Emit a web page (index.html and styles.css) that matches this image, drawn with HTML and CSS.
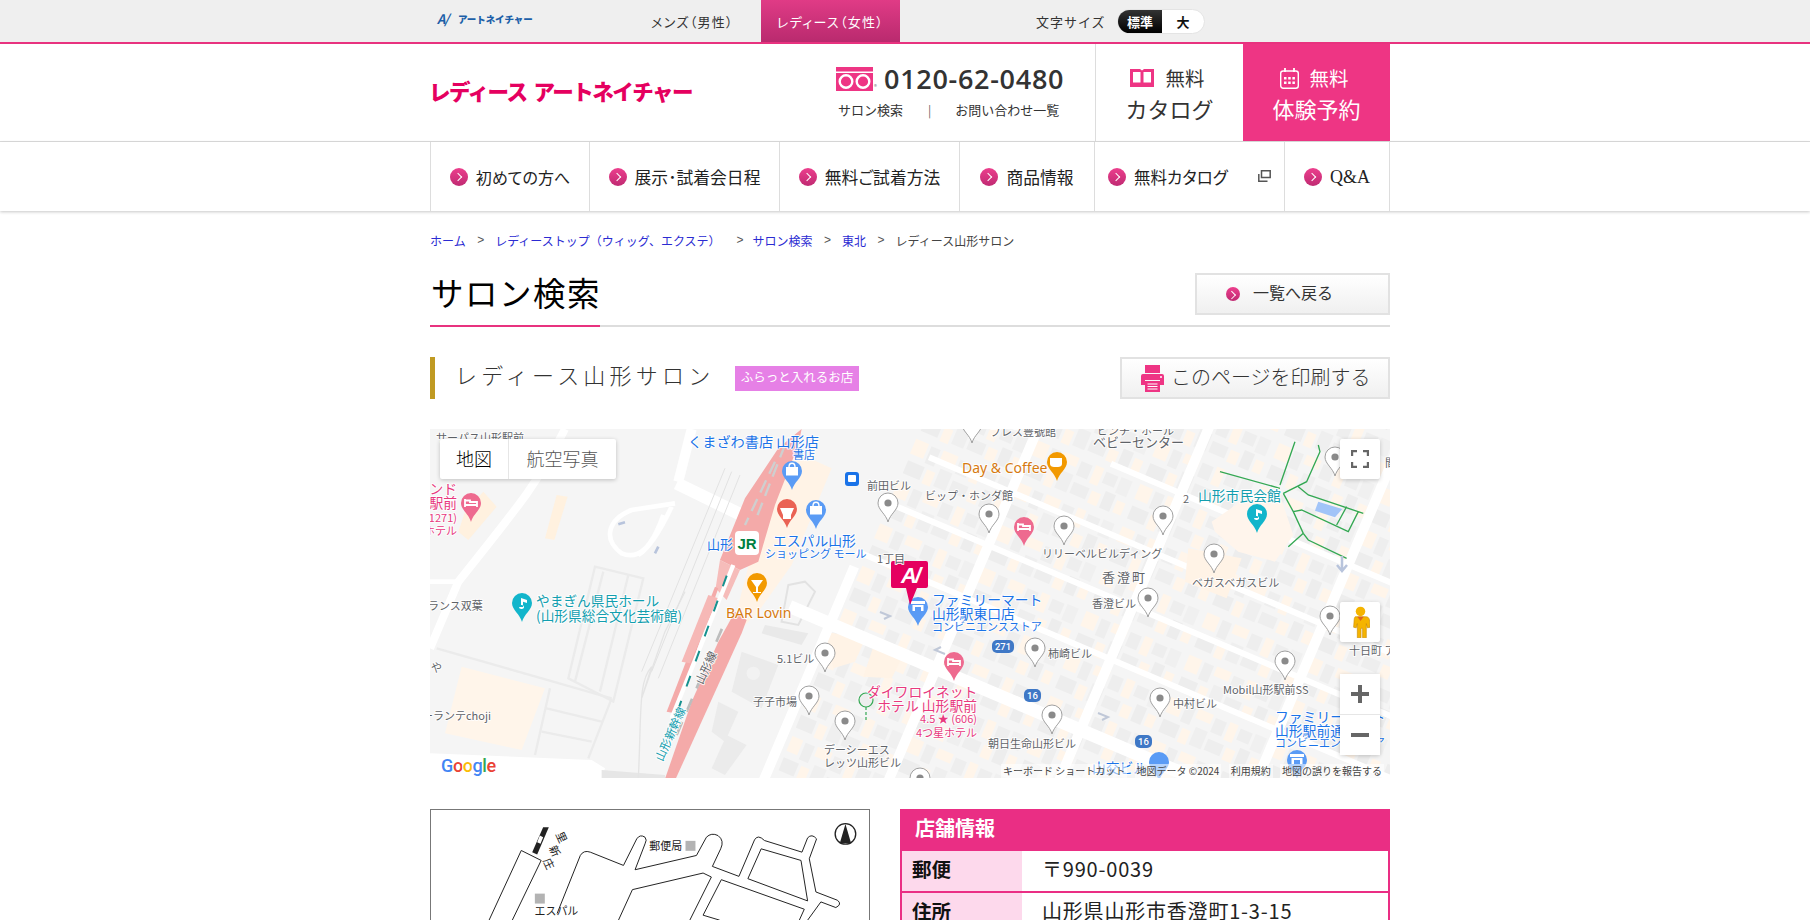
FILE: index.html
```html
<!DOCTYPE html>
<html lang="ja">
<head>
<meta charset="utf-8">
<title>サロン検索</title>
<link rel="stylesheet" href="styles.css">
</head>
<body>
<div class="topbar">
  <div class="wrap topbar-in">
    <a class="brand-small"><span class="an">A/</span><span>アートネイチャー</span></a>
    <a class="tab">メンズ（男性）</a>
    <a class="tab tab-on">レディース（女性）</a>
    <span class="size-label">文字サイズ</span>
    <div class="size-switch"><span class="size-on">標準</span><span class="size-off">大</span></div>
  </div>
</div>
<header class="header">
  <div class="wrap header-in">
    <div class="logo"><span>レディース</span><span>アートネイチャー</span></div>
    <div class="contact">
      <div class="phone">
        <svg class="freedial" viewBox="0 0 37 24"><rect width="37" height="24" fill="#ee3584"/><rect y="4.500" width="37" height="1.500" fill="#fff"/><circle cx="10" cy="14.500" r="6.300" fill="none" stroke="#fff" stroke-width="2.400"/><circle cx="27" cy="14.500" r="6.300" fill="none" stroke="#fff" stroke-width="2.400"/></svg>
        <span class="reg">®</span>
        <span class="tel">0120-62-0480</span>
      </div>
      <div class="contact-links"><a>サロン検索</a><i>|</i><a>お問い合わせ一覧</a></div>
    </div>
    <a class="cta">
      <span class="cta-top">
        <svg class="ico-book" viewBox="0 0 24 18"><path d="M0 0h10l2 1.500L14 0h10v18H14l-2 0-2 0H0z" fill="#ee3584"/><path d="M3 3h7.500v10.500H3zM13.500 3H21v10.500h-7.500z" fill="#fff"/></svg>
        <span>無料</span>
      </span>
      <span class="cta-big">カタログ</span>
    </a>
    <a class="cta cta-pink">
      <span class="cta-top">
        <svg class="ico-cal" viewBox="0 0 19 21"><rect x=".7" y="3" width="17.600" height="17.300" rx="2.500" fill="none" stroke="#fff" stroke-width="1.400"/><path d="M5 0v4M14 0v4" stroke="#fff" stroke-width="1.800"/><path d="M4 9h2.500v2.500H4zM8.200 9h2.500v2.500H8.200zM12.400 9h2.500v2.500h-2.500zM4 13.500h2.500V16H4zM8.200 13.500h2.500V16H8.200zM12.400 13.500h2.500V16h-2.500z" fill="#fff"/></svg>
        <span>無料</span>
      </span>
      <span class="cta-big">体験予約</span>
    </a>
  </div>
</header>
<nav class="nav">
  <ul class="wrap nav-in">
    <li><a><span class="chev"></span>初めての方へ</a></li>
    <li><a><span class="chev"></span>展示･試着会日程</a></li>
    <li><a><span class="chev"></span>無料ご試着方法</a></li>
    <li><a><span class="chev"></span>商品情報</a></li>
    <li class="nav-ext"><a><span class="chev"></span><span class="nav-small">無料カタログ</span><svg class="ico-ext" viewBox="0 0 13 12"><path d="M3.500 .8h8.700v6.700H3.500z" fill="none" stroke="#555" stroke-width="1.500"/><path d="M.8 4v7.200h8.700" fill="none" stroke="#555" stroke-width="1.500"/></svg></a></li>
    <li><a><span class="chev"></span><span class="qa">Q&amp;A</span></a></li>
  </ul>
</nav>
<main class="wrap">
  <div class="crumbs">
    <a>ホーム</a><b>&gt;</b><a>レディーストップ（ウィッグ、エクステ）</a><b class="gap">&gt;</b><a>サロン検索</a><b>&gt;</b><a>東北</a><b>&gt;</b><span>レディース山形サロン</span>
  </div>
  <div class="title-row">
    <h1>サロン検索</h1>
    <a class="btn btn-back"><span class="chev chev-s"></span><span class="btn-text">一覧へ戻る</span></a>
  </div>
  <div class="sub-row">
    <h2>レディース山形サロン</h2>
    <span class="badge">ふらっと入れるお店</span>
    <a class="btn btn-print">
      <svg class="ico-print" viewBox="0 0 23 27"><path d="M4 0h15v8H4z" fill="#ee3584"/><path d="M2 9h19a2 2 0 0 1 2 2v9h-4v-5H4v5H0v-9a2 2 0 0 1 2-2z" fill="#ee3584"/><circle cx="20" cy="12" r="1" fill="#fff"/><path d="M4 16h15v11H4z" fill="#ee3584"/><path d="M6.500 19h10M6.500 21.500h10M6.500 24h10" stroke="#fff" stroke-width="1"/></svg>
      <span class="btn-text">このページを印刷する</span>
    </a>
  </div>

  <div class="map">
    <svg class="map-svg" viewBox="0 -1 960 349">
      <defs>
        <path id="pin" d="M0 0C-2-8-10-12-10-19A10 10 0 1 1 10-19C10-12 2-8 0 0Z"/>
        <g id="gpin"><use href="#pin" class="pin-grey"/><circle cy="-19" r="3.600" fill="#8a8a8a"/></g>
        <g id="bed"><path d="M-6-15v-8M-6-17H6v-3H-1v-1.500H-6M6-15v-5" fill="none" stroke="#fff" stroke-width="1.800"/></g>
        <g id="bag"><path d="M-6-23H6v8.500H-6z" fill="#fff"/><path d="M-3-23c0-5 6-5 6 0" fill="none" stroke="#fff" stroke-width="1.400"/></g>
        <g id="mart"><path d="M-7-25H7v3H-7zM-5.500-21h11v6h-2.500v-4h-6v4h-2.500z" fill="#fff"/></g>
        <g id="note"><path d="M-3-15a2.500 2 0 1 0 2-2v-7l6 2v3l-4-1.300V-15z" fill="#fff"/></g>
        <pattern id="blocks" width="112" height="46" patternUnits="userSpaceOnUse" patternTransform="rotate(23)">
          <rect width="112" height="46" fill="#f5f5f5"/>
          <rect x="3" y="2" width="14" height="16" fill="#fff5ea"/>
          <rect x="20" y="3" width="10" height="18" fill="#eeeeee"/>
          <rect x="33" y="2" width="16" height="10" fill="#fff5ea"/>
          <rect x="52" y="4" width="12" height="15" fill="#eeeeee"/>
          <rect x="67" y="2" width="9" height="19" fill="#fff5ea"/>
          <rect x="79" y="4" width="13" height="12" fill="#eeeeee"/>
          <rect x="95" y="3" width="12" height="17" fill="#f0f0f0"/>
          <rect x="4" y="25" width="18" height="14" fill="#ededed"/>
          <rect x="25" y="26" width="9" height="15" fill="#fff5ea"/>
          <rect x="37" y="20" width="13" height="19" fill="#efefef"/>
          <rect x="53" y="26" width="17" height="12" fill="#eeeeee"/>
          <rect x="73" y="27" width="10" height="13" fill="#fff5ea"/>
          <rect x="86" y="22" width="11" height="18" fill="#ededed"/>
          <rect x="100" y="26" width="9" height="13" fill="#fff5ea"/>
        </pattern>
      </defs>

      <rect y="-1" width="960" height="350" fill="#f5f5f5"/>
      <polygon points="345,349 487,-1 960,-1 960,349" fill="url(#blocks)"/>

      <!-- west side and station, in crop units -->
      <g transform="matrix(.3333 0 0 .3333 -5 -5)">
        <polygon points="110,725 360,790 290,975 60,925" fill="#fff5ea"/>
        <polygon points="395,210 428,215 388,345 360,340" fill="#fff1df"/>
        <polygon points="100,320 130,345 215,245 175,200 120,260" fill="#fff1df"/>
        <polygon points="1065,60 1220,130 1100,420 1000,560 960,600 940,540" fill="#fff3e6"/>
        <path d="M420,12C340,170 300,220 100,470L15,670" fill="none" stroke="#fff" stroke-width="24"/>
        <path d="M15,470H100" fill="none" stroke="#fff" stroke-width="14"/>
        <path d="M800,12L760,170" fill="none" stroke="#fff" stroke-width="30"/>
        <path d="M755,175L950,270" fill="none" stroke="#fff" stroke-width="38"/>
        <path d="M750,235L620,255C545,285 535,345 590,385C640,405 680,370 715,270M740,245C700,330 665,375 640,390" fill="none" stroke="#fff" stroke-width="14"/>
        <path d="M580,298L600,292M700,365L690,385" stroke="#b8c4dc" stroke-width="8"/>
        <path d="M430,760L510,425L655,460L565,830ZM535,440L450,770M610,450L525,800" fill="none" stroke="#ebebeb" stroke-width="7"/>
        <path d="M35,670L560,820M375,790L330,990M560,820L490,1000M365,850L530,890M350,920L500,950" fill="none" stroke="#ebebeb" stroke-width="7"/>
        <polygon points="15,985 500,1005 540,1030 530,1062 15,1062" fill="#fff"/>
        <polygon points="530,1035 720,1050 720,1062 530,1062" fill="#e6e6e6"/>
        <path d="M780,500L720,620 650,820 680,725C640,770 650,850 640,1062" fill="none" stroke="#e4e4e4" stroke-width="4"/>
        <path d="M900,130L650,740M920,140L680,740M945,150L700,760" fill="none" stroke="#e2e2e2" stroke-width="3"/>
        <polygon points="720,1062 752,1062 950,625 965,585 930,560 880,650 800,830" fill="#f4aaa9"/>
        <polygon points="1060,70 1130,12 1120,60 1050,240 1000,410 945,435 885,405 960,220" fill="#f4aaa9"/>
        <polygon points="885,405 945,435 905,525 872,490" fill="#f6bcba"/>
        <polygon points="725,860 750,865 880,490 870,485" fill="#f4aaa9"/>
        <polygon points="770,710 795,715 880,520 850,510" fill="#f6b8b6"/>
        <path d="M1080,60L990,290M1050,110L960,300" stroke="#cfcfcf" stroke-width="7" stroke-dasharray="40 22"/>
        <path d="M740,880L925,420" stroke="#fff" stroke-width="13"/>
        <path d="M730,935L915,425" stroke="#17918f" stroke-width="6" stroke-dasharray="34 46"/>
        <path d="M755,930L900,590" stroke="#bdbdbd" stroke-width="8" stroke-dasharray="42 34"/>
        <polygon points="1020,600 1150,625 1130,660 1010,625" fill="#e9e9e9"/>
        <polygon points="950,680 1060,720 1010,850 920,800" fill="#ebebeb"/>
        <circle cx="985" cy="745" r="20" fill="#f2f2f2"/>
        <polygon points="880,830 940,860 900,950 860,920" fill="#ebebeb"/>
        <polygon points="905,930 965,960 900,1050 860,1030" fill="#ebebeb"/>
        <polygon points="1200,620 1320,640 1290,710 1225,730" fill="#fff3e6"/>
        <polygon points="1350,650 1440,680 1400,760 1315,755" fill="#fff3e6"/>
        <polygon points="1090,480 1140,470 1170,500 1120,600 1070,590" fill="#f5f5f5" stroke="#e2e2e2" stroke-width="6"/>
      </g>

      <!-- street grid east of the station -->
      <g transform="rotate(23)" stroke="#fff" fill="none">
        <path d="M444-40V200M559-320V200M716-440V200M898-560V200" stroke-width="10"/>
        <path d="M400 22H1250" stroke-width="13"/>
        <path d="M440-55H1250M460-112H1250M470-170H1250M640-235H1250" stroke-width="6"/>
      </g>
      <g transform="matrix(.3333 0 0 .3333 475 -5)">
        <polygon points="920,290 1000,235 1130,225 1165,330 1110,410 1000,380 930,320" fill="#fff5ec"/>
        <polygon points="850,370 1010,400 965,520 840,470" fill="#fff3e6"/>
        <polygon points="1240,230 1312,252 1290,277 1230,257" fill="#a1c4f8"/>
        <path d="M1170,50L1125,180M1240,60L1245,80 1205,170 1135,205M945,140L1125,190M1135,205L1165,260 1195,325 1210,345 1325,400M1195,325L1150,365M1180,185L1210,210 1375,265M1165,260L1190,255 1330,320 1360,260M1325,245L1295,300" fill="none" stroke="#34a853" stroke-width="4"/>
      </g>
      <path d="M907 135l5 6 5-6M912 126v14" stroke="#b8c4dc" stroke-width="2.500" fill="none"/>
      <path d="M515 224l-10-4 6-3M668 283l10 4-6 3M450 182l10 4-6 3" stroke="#c0c8d8" stroke-width="2" fill="none"/>
      <path d="M436 277v15" stroke="#34a853" stroke-width="1.200" stroke-dasharray="3 2"/>
      <circle cx="436" cy="270" r="7" fill="none" stroke="#34a853" stroke-width="1.200"/>

      <!-- grey pins -->
      <use href="#gpin" x="458" y="92"/><use href="#gpin" x="395" y="242"/><use href="#gpin" x="379" y="285"/>
      <use href="#gpin" x="415" y="310"/><use href="#gpin" x="542" y="13"/><use href="#gpin" x="559" y="103"/>
      <use href="#gpin" x="634" y="115"/><use href="#gpin" x="733" y="105"/><use href="#gpin" x="784" y="143"/>
      <use href="#gpin" x="718" y="187"/><use href="#gpin" x="900" y="205"/><use href="#gpin" x="605" y="237"/>
      <use href="#gpin" x="622" y="304"/><use href="#gpin" x="730" y="287"/><use href="#gpin" x="855" y="250"/>
      <use href="#gpin" x="905" y="46"/><use href="#gpin" x="490" y="367"/>

      <!-- coloured pins -->
      <g fill="#5a9bf5"><use href="#pin" x="362" y="60"/><use href="#bag" x="362" y="60"/><use href="#pin" x="386" y="99"/><use href="#bag" x="386" y="99"/></g>
      <g fill="#5a9bf5"><use href="#pin" x="488" y="196"/><use href="#mart" x="488" y="196"/><use href="#pin" x="729" y="351"/><use href="#pin" x="867" y="349"/><use href="#mart" x="867" y="349"/></g>
      <g fill="#ee6a8f"><use href="#pin" x="41" y="92"/><use href="#bed" x="41" y="92"/><use href="#pin" x="594" y="116"/><use href="#bed" x="594" y="116"/><use href="#pin" x="524" y="251"/><use href="#bed" x="524" y="251"/></g>
      <use href="#pin" x="357" y="98" fill="#ea6254"/><path d="M350 78h14l-3 7v4h-8v-4z" fill="#fff"/>
      <use href="#pin" x="327" y="172" fill="#f29900"/><path d="M321 150h12l-5 7v5h3v1h-8v-1h3v-5z" fill="#fff"/>
      <use href="#pin" x="627" y="51" fill="#f29900"/><path d="M620 28h12v6c0 2-2 3-4 3h-4c-2 0-4-1-4-3z" fill="#fff"/>
      <g fill="#12b5cb"><use href="#pin" x="92" y="192"/><use href="#note" x="92" y="192"/><use href="#pin" x="827" y="103"/><use href="#note" x="827" y="103"/></g>

      <rect x="415" y="42" width="14" height="14" rx="3" fill="#1a73e8"/><rect x="418" y="45" width="8" height="7" rx="1" fill="#fff"/>
      <rect x="305" y="101" width="24" height="24" rx="4" fill="#fff"/>
      <text class="jr" x="317" y="113">JR</text>

      <!-- route shields -->
      <rect x="562" y="210" width="22" height="13" rx="5" fill="#3f78c6"/><text class="shield" x="573" y="216.500">271</text>
      <rect x="594" y="259" width="17" height="13" rx="5" fill="#3f78c6"/><text class="shield" x="602.500" y="265.500">16</text>
      <rect x="705" y="305" width="17" height="13" rx="5" fill="#3f78c6"/><text class="shield" x="713.500" y="311.500">16</text>

      <!-- salon marker -->
      <path d="M463 131h33a2 2 0 0 1 2 2v23a2 2 0 0 1-2 2h-9l-7 17-4-17h-13a2 2 0 0 1-2-2v-23a2 2 0 0 1 2-2z" fill="#e5005f"/>
      <text class="an-pin" x="480" y="145">A/</text>

      <!-- labels -->
      <g class="poi">
        <text x="6" y="7">サーパス山形駅前</text>
        <text x="437" y="55">前田ビル</text>
        <text x="447" y="128">1丁目</text>
        <text x="-2" y="175">ランス双葉</text>
        <text x="-10" y="237">ろや</text>
        <text x="-8" y="285">ーランテchoji</text>
        <text x="347" y="228">5.1ビル</text>
        <text x="323" y="271">子子市場</text>
        <text x="394" y="319">デーシーエス</text>
        <text x="394" y="332">レッツ山形ビル</text>
        <text x="560" y="1">プレス豊號館</text>
        <text x="667" y="0">ピンチ・ホール</text>
        <text class="s13" x="663" y="11">ベビーセンター</text>
        <text x="495" y="65">ビップ・ホンダ館</text>
        <text x="753" y="68">2</text>
        <text x="612" y="123">リリーベルビルディング</text>
        <text class="town" x="672" y="146">香澄町</text>
        <text x="762" y="152">ベガスベガスビル</text>
        <text x="662" y="173">香澄ビル</text>
        <text x="618" y="223">柿崎ビル</text>
        <text x="558" y="313">朝日生命山形ビル</text>
        <text x="743" y="273">中村ビル</text>
        <text x="793" y="259">Mobil山形駅前SS</text>
        <text x="955" y="32">間</text>
        <text x="919" y="220">十日町 ア</text>
        <text class="s-rail" transform="translate(268 253) rotate(-65)">山形線</text>
      </g>
      <g class="blue">
        <text class="s145" x="258" y="11">くまざわ書店 山形店</text>
        <text x="363" y="24">書店</text>
        <text class="s13" x="277" y="113">山形</text>
        <text class="s14" x="343" y="110">エスパル山形</text>
        <text x="335" y="123">ショッピング モール</text>
        <text class="s14" x="502" y="169">ファミリーマート</text>
        <text class="s14" x="502" y="183">山形駅東口店</text>
        <text x="502" y="196">コンビニエンスストア</text>
        <text class="s14" x="845" y="286">ファミリーマート</text>
        <text class="s14" x="845" y="300">山形駅前通</text>
        <text x="845" y="312">コンビニエンスストア</text>
        <text class="s14" x="662" y="337">山交ビル</text>
      </g>
      <g class="teal">
        <text class="s137" x="106" y="170">やまぎん県民ホール</text>
        <text class="s137" x="106" y="185">(山形県総合文化芸術館)</text>
        <text class="s14" x="768" y="65">山形市民会館</text>
        <text class="s-rail" transform="translate(228 330) rotate(-66)">山形新幹線</text>
      </g>
      <g class="orange">
        <text x="296" y="182">BAR Lovin</text>
        <text x="532" y="37">Day &amp; Coffee</text>
      </g>
      <g class="hotel">
        <text class="s14 end" x="27" y="58">ンド</text>
        <text class="s14 end" x="27" y="72">駅前</text>
        <text class="end" x="27" y="87">1271)</text>
        <text class="end" x="27" y="100">ホテル</text>
        <text class="s14" x="437" y="261">ダイワロイネット</text>
        <text class="s14 end" x="547" y="275">ホテル 山形駅前</text>
        <text class="end" x="547" y="288">4.5 ★ (606)</text>
        <text class="end" x="547" y="302">4つ星ホテル</text>
      </g>
      <text class="google" x="11" y="335"><tspan fill="#4285f4">G</tspan><tspan fill="#ea4335">o</tspan><tspan fill="#fbbc05">o</tspan><tspan fill="#4285f4">g</tspan><tspan fill="#34a853">l</tspan><tspan fill="#ea4335">e</tspan></text>
    </svg>

    <div class="map-type"><span class="type-on">地図</span><span>航空写真</span></div>
    <button class="map-ctl map-full" aria-label="全画面">
      <svg viewBox="0 0 18 18"><path d="M1 6V1h5M12 1h5v5M17 12v5h-5M6 17H1v-5" fill="none" stroke="#666" stroke-width="2.400"/></svg>
    </button>
    <button class="map-ctl map-peg" aria-label="ストリートビュー">
      <svg viewBox="0 0 18 30"><circle cx="9" cy="5" r="4.500" fill="#f5b400"/><path d="M4 10h10c2 0 3 1 3.500 3l.5 7-2.500.5-1-4V30h-3.500v-9H9.500v9H6V16.500l-1 4-2.500-.5.500-7C3 11 4 10 4 10z" fill="#f5b400" stroke="#c98a00" stroke-width=".6"/><path d="M6 10l3 4 3-4z" fill="#e0641c"/></svg>
    </button>
    <div class="map-zoom">
      <button class="zoom-btn" aria-label="拡大"><svg viewBox="0 0 18 18"><path d="M9 0v18M0 9h18" stroke="#666" stroke-width="4"/></svg></button>
      <button class="zoom-btn" aria-label="縮小"><svg viewBox="0 0 18 18"><path d="M0 9h18" stroke="#666" stroke-width="4"/></svg></button>
    </div>
    <div class="map-attr"><span>キーボード ショートカット</span><span class="attr-bg">地図データ ©2024</span><span class="attr-bg">利用規約</span><span class="attr-bg">地図の誤りを報告する</span></div>
  </div>

  <div class="lower">
    <div class="access">
      <svg class="access-svg" viewBox="30 88 1320 660">
        <g fill="none" stroke="#222" stroke-width="3">
          <path d="M205,420L302,210 362,240 275,420"/>
          <path d="M410,400L480,225Q490,208 510,215L610,255 650,175Q660,160 675,170 682,178 675,190L645,268 830,225 860,170Q875,155 895,165 915,180 903,205L878,258 958,288 1005,178Q1015,160 1035,180L1148,215 1165,172Q1178,158 1192,175L1170,235 1190,335 1255,360Q1270,372 1250,382L1205,365 1165,420"/>
          <path d="M595,420L637,328 850,278 875,290 810,420"/>
          <path d="M905,298L1155,387 1140,420M905,298L850,405 900,420"/>
          <path d="M1025,205L1145,240 1165,362 985,295Z"/>
        </g>
        <path d="M335,215L368,140H385L350,222Z" fill="#222"/>
        <path d="M350,185L358,165 368,170 360,190Z" fill="#fff"/>
        <rect x="797" y="181" width="30" height="30" fill="#b3b3b3"/>
        <rect x="343" y="340" width="30" height="30" fill="#b3b3b3"/>
        <text class="acc-t" x="688" y="208">郵便局</text>
        <text class="acc-t" x="342" y="404">エスパル</text>
        <g class="acc-v">
          <text transform="translate(405 160) rotate(65)">里</text>
          <text transform="translate(385 202) rotate(65)">新</text>
          <text transform="translate(367 240) rotate(65)">庄</text>
        </g>
        <circle cx="1279" cy="160" r="31" fill="none" stroke="#222" stroke-width="4"/>
        <path d="M1279,130L1262,188H1296Z" fill="#222"/>
      </svg>
    </div>
    <div class="info">
      <h3>店舗情報</h3>
      <dl class="info-row"><dt>郵便</dt><dd>〒990-0039</dd></dl>
      <dl class="info-row"><dt>住所</dt><dd>山形県山形市香澄町1-3-15</dd></dl>
    </div>
  </div>
</main>
</body>
</html>
```

FILE: styles.css
```css
* { box-sizing: border-box; }
html, body { margin: 0; height: 100%; overflow: hidden; }
body { background: #fff; color: #333; font-family: "Noto Sans CJK JP", "Noto Sans", sans-serif; }
a { color: inherit; text-decoration: none; }
ul, dl, dd, h1, h2, h3 { margin: 0; padding: 0; }
.wrap { width: 960px; margin-left: 430px; }

/* top bar */
.topbar { height: 44px; background: #efefef; border-bottom: 2px solid #e8327f; }
.topbar-in { display: flex; height: 42px; align-items: center; }
.brand-small { display: flex; align-items: center; gap: 8px; width: 187px; margin-left: 7px; margin-top: -5px; color: #1c5fa8; font-weight: 900; font-size: 9.500px; white-space: nowrap; letter-spacing: -.1px; }
.an { font-style: italic; font-size: 13px; font-weight: 700; width: 13px; letter-spacing: -1px; }
.tab { display: flex; align-items: center; justify-content: center; height: 42px; width: 137px; font-size: 13px; font-feature-settings: "palt"; letter-spacing: 1.300px; color: #333; }
.tab-on { width: 139px; color: #fff; background: linear-gradient(#e03b86, #b92a6e); }
.size-label { margin-left: 136px; font-size: 13px; letter-spacing: 1px; width: 81px; white-space: nowrap; color: #333; }
.size-switch { display: flex; width: 88px; height: 25px; border-radius: 13px; overflow: hidden; border: 1px solid #e4e4e4; background: #fff; font-size: 13px; font-weight: 700; line-height: 23px; text-align: center; }
.size-on { width: 44px; color: #fff; background: linear-gradient(#333, #000); }
.size-off { flex: 1; color: #111; }

/* header */
.header { height: 98px; border-bottom: 1px solid #ddd; }
.header-in { display: flex; height: 97px; }
.logo { flex: 1; align-self: center; display: flex; gap: 7px; margin: -4px 0 0 -1px; color: #e5005f; font-size: 21.500px; font-weight: 900; letter-spacing: -1.500px; white-space: nowrap; }
.contact { width: 259px; display: flex; flex-direction: column; }
.phone { display: flex; align-items: flex-end; height: 47px; color: #333; }
.freedial { width: 37px; height: 24px; display: block; }
.reg { font-size: 6px; line-height: 8px; color: #777; width: 11px; padding-left: 1px; }
.tel { font-family: "Open Sans", sans-serif; font-weight: 600; font-size: 27px; line-height: 27px; letter-spacing: .7px; margin-bottom: -1px; }
.contact-links { display: flex; margin-top: 9px; font-size: 13px; line-height: 20px; padding-left: 2px; color: #333; }
.contact-links i { font-style: normal; margin: 0 24px 0 25px; color: #666; font-size: 12px; }
.cta { width: 148px; border-left: 1px solid #ddd; display: flex; flex-direction: column; align-items: center; padding-top: 20px; color: #333; }
.cta-pink { width: 147px; border-left: 0; background: #ee3584; color: #fff; }
.cta-top { display: flex; align-items: center; gap: 11px; height: 28px; padding-right: 4px; font-size: 19.500px; line-height: 28px; }
.cta-big { font-size: 22px; line-height: 30px; margin-top: 1px; }
.ico-book { width: 24px; height: 18px; }
.ico-cal { width: 19px; height: 21px; margin-right: -1px; }

/* nav */
.nav { height: 69px; box-shadow: 0 1px 3px rgba(0, 0, 0, .22); position: relative; }
.nav-in { display: grid; grid-template-columns: 159px 190px 180px 135px 190px 106px; list-style: none; height: 69px; }
.nav-in li { border-left: 1px solid #ddd; }
.nav-in li:last-child { border-right: 1px solid #ddd; }
.nav-in a { display: flex; align-items: center; justify-content: center; gap: 8px; height: 100%; font-size: 16.800px; font-feature-settings: "palt"; color: #222; white-space: nowrap; }
.nav-in li:first-child a { font-size: 16px; }
.nav-ext a { justify-content: flex-start; padding-left: 13px; }
.nav-small { font-size: 16.500px; width: 116px; }
.ico-ext { width: 13px; height: 12px; margin-top: -2px; }
.qa { font-family: "Liberation Serif", serif; font-size: 18px; line-height: 26px; }
.chev { flex: none; display: inline-block; position: relative; width: 18px; height: 18px; border-radius: 50%; background: linear-gradient(#ec3f8d, #c02a72); }
.chev::after { content: ""; position: absolute; left: 5px; top: 6px; width: 5px; height: 5px; border-top: 1.500px solid #fff; border-right: 1.500px solid #fff; transform: rotate(45deg); }
.chev-s { width: 14px; height: 14px; }
.chev-s::after { left: 3px; top: 4.500px; width: 4.500px; height: 4.500px; }

/* breadcrumb */
.crumbs { display: flex; margin-top: 19px; height: 20px; align-items: center; font-size: 12px; color: #2b2bd2; white-space: nowrap; }
.crumbs b { font-weight: 400; color: #555; margin: 0 11px 0 11.500px; font-family: "Liberation Sans", sans-serif; }
.crumbs b.gap { margin: 0 9px 0 16px; }
.crumbs span { color: #444; }

/* title */
.title-row { display: flex; justify-content: space-between; height: 54px; margin-top: 23px; border-bottom: 2px solid #ddd; }
h1 { width: 170px; height: 54px; border-bottom: 2px solid #e8327f; font-size: 32.500px; line-height: 38px; padding-left: 1px; font-weight: 400; color: #000; letter-spacing: 1.500px; white-space: nowrap; }
.btn { display: flex; align-items: center; border: 2px solid #e2e2e2; background: linear-gradient(#fff, #f0f0f0); color: #333; }
.btn-text { margin-top: -4px; }
.btn-back { width: 195px; height: 42px; padding-left: 29px; gap: 13px; font-size: 16px; }
.sub-row { display: flex; align-items: center; margin-top: 30px; height: 42px; }
h2 { width: 305px; height: 42px; border-left: 5px solid #c09a22; padding-left: 20px; font-size: 22px; line-height: 35px; font-weight: 300; letter-spacing: 4.200px; white-space: nowrap; color: #333; }
.badge { width: 124px; height: 25px; background: #e680e6; color: #fff; font-size: 12.500px; line-height: 22px; text-align: center; white-space: nowrap; }
.btn-print { width: 270px; height: 42px; margin-left: auto; padding-left: 19px; gap: 7px; font-size: 20px; white-space: nowrap; font-weight: 300; }
.ico-print { width: 23px; height: 27px; flex: none; }

/* map */
.map { position: relative; height: 349px; margin-top: 30px; overflow: hidden; }
.map-svg { display: block; width: 960px; height: 349px; }
.map-svg text { font-family: "Noto Sans CJK JP", sans-serif; font-size: 11px; dominant-baseline: central; paint-order: stroke; stroke: rgba(255, 255, 255, .85); stroke-width: 2px; stroke-linejoin: round; }
.pin-grey { fill: #fff; stroke: #a0a0a0; stroke-width: 1; }
.poi { fill: #5f6368; }
.blue { fill: #1a73e8; }
.teal { fill: #129eaf; }
.orange { fill: #d67a10; }
.hotel { fill: #e8397e; }
.map-svg .orange text { font-size: 14px; font-family: "Noto Sans", sans-serif; }
.map-svg .s13 { font-size: 13px; }
.map-svg .s14 { font-size: 13.800px; }
.map-svg .s145 { font-size: 14.200px; }
.map-svg .s137 { font-size: 13.700px; }
.map-svg .end { text-anchor: end; }
.map-svg .town { font-size: 13px; letter-spacing: 2px; }
.map-svg .s-rail { font-size: 11.500px; }
.map-svg .jr { font-family: "Liberation Sans", sans-serif; font-weight: 700; font-size: 15px; fill: #007f41; text-anchor: middle; stroke: none; }
.map-svg .shield { font-family: Roboto, sans-serif; font-size: 9.500px; font-weight: 500; fill: #fff; text-anchor: middle; stroke: none; }
.map-svg .an-pin { font-family: "Liberation Sans", sans-serif; font-size: 22px; font-weight: 700; font-style: italic; fill: #fff; text-anchor: middle; stroke: none; letter-spacing: -2px; }
.map-svg .google { font-family: Roboto, sans-serif; font-size: 18px; font-weight: 500; letter-spacing: -.4px; stroke-width: 2.500px; }
.map-type { position: absolute; left: 10px; top: 10px; display: flex; height: 40px; background: #fff; border-radius: 2px; box-shadow: 0 1px 4px rgba(0, 0, 0, .22); font-family: "Noto Sans CJK JP", sans-serif; font-size: 18px; line-height: 38px; color: #565656; font-weight: 300; }
.map-type span { width: 107px; text-align: center; }
.map-type .type-on { width: 69px; color: #000; border-right: 1px solid #e6e6e6; }
.map-ctl, .zoom-btn { display: flex; align-items: center; justify-content: center; border: 0; padding: 0; background: #fff; }
.map-ctl { position: absolute; left: 910px; width: 40px; height: 40px; border-radius: 2px; box-shadow: 0 1px 4px rgba(0, 0, 0, .2); }
.map-full { top: 10px; }
.map-full svg { width: 18px; height: 18px; }
.map-peg { top: 173px; }
.map-peg svg { width: 19px; height: 32px; }
.map-zoom { position: absolute; left: 910px; top: 245px; width: 40px; height: 81px; background: #fff; border-radius: 2px; box-shadow: 0 1px 4px rgba(0, 0, 0, .2); }
.zoom-btn { width: 40px; height: 40px; }
.zoom-btn + .zoom-btn { border-top: 1px solid #e6e6e6; height: 41px; }
.zoom-btn svg { width: 18px; height: 18px; }
.map-attr { position: absolute; right: 0; bottom: 0; width: 389px; height: 14px; display: flex; justify-content: space-between; font-family: "Noto Sans CJK JP", sans-serif; font-size: 10px; line-height: 14px; color: #444; white-space: nowrap; padding-right: 6px; }
.map-attr span { background: rgba(255, 255, 255, .55); padding: 0 2px; }

/* lower */
.lower { display: flex; justify-content: space-between; margin-top: 31px; }
.access { width: 440px; height: 220px; border: 1px solid #777; overflow: hidden; }
.access-svg { display: block; width: 438px; height: 219px; }
.access-svg text { font-family: "Noto Sans CJK JP", sans-serif; font-size: 33px; fill: #222; }
.info { width: 490px; border: 2px solid #ea2e84; border-top: 0; }
.info h3 { margin: 0 -2px; height: 42px; padding-left: 15px; background: #ea2e84; color: #fff; font-size: 20px; line-height: 38px; font-weight: 700; }
.info-row { display: flex; height: 42px; border-bottom: 2px solid #ea2e84; }
.info-row dt { width: 120px; background: #fdd9ec; padding-left: 10px; font-size: 19.500px; font-weight: 700; line-height: 36px; color: #111; }
.info-row dd { padding-left: 20px; font-size: 20px; line-height: 36px; color: #222; letter-spacing: .8px; }
```
